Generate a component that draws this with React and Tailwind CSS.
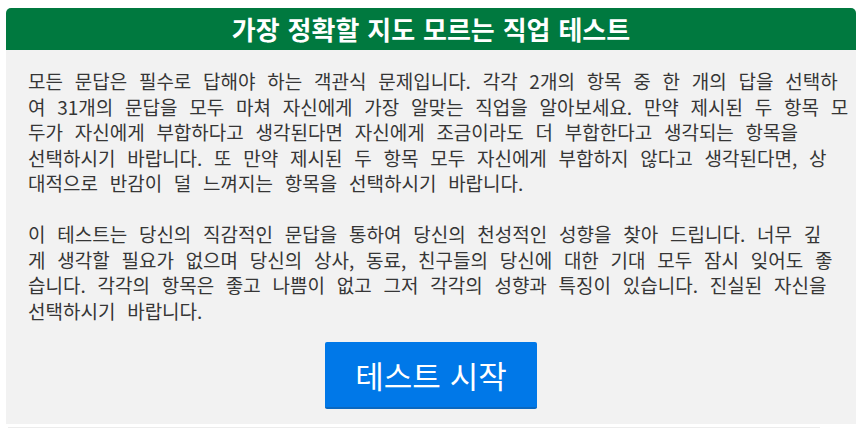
export default function App() {
  const font = { fontFamily: '"Noto Sans CJK KR", "Noto Sans", sans-serif' };
  return (
    <div className="w-[863px] h-[429px] bg-white overflow-hidden" style={font}>
      <div className="ml-[6px] mt-[8px] w-[850px]">
        <div className="h-[42px] rounded-t-[5px] bg-[#00793f] flex items-center justify-center">
          <h1 className="text-white text-[26px] font-bold leading-none [word-spacing:2px]">
            가장 정확할 지도 모르는 직업 테스트
          </h1>
        </div>
        <div className="bg-[#f2f2f2] h-[374px] px-[22px] pt-[18px]">
          <p className="text-[19px] leading-[25.5px] text-[#363636] [word-spacing:7.5px] whitespace-nowrap">
            모든 문답은 필수로 답해야 하는 객관식 문제입니다. 각각 2개의 항목 중 한 개의 답을 선택하<br />
            여 31개의 문답을 모두 마쳐 자신에게 가장 알맞는 직업을 알아보세요. 만약 제시된 두 항목 모<br />
            두가 자신에게 부합하다고 생각된다면 자신에게 조금이라도 더 부합한다고 생각되는 항목을<br />
            선택하시기 바랍니다. 또 만약 제시된 두 항목 모두 자신에게 부합하지 않다고 생각된다면, 상<br />
            대적으로 반감이 덜 느껴지는 항목을 선택하시기 바랍니다.
          </p>
          <p className="mt-[25.5px] text-[19px] leading-[25.5px] text-[#363636] [word-spacing:7.5px] whitespace-nowrap">
            이 테스트는 당신의 직감적인 문답을 통하여 당신의 천성적인 성향을 찾아 드립니다. 너무 깊<br />
            게 생각할 필요가 없으며 당신의 상사, 동료, 친구들의 당신에 대한 기대 모두 잠시 잊어도 좋<br />
            습니다. 각각의 항목은 좋고 나쁨이 없고 그저 각각의 성향과 특징이 있습니다. 진실된 자신을<br />
            선택하시기 바랍니다.
          </p>
          <div className="flex justify-center mt-[19px]">
            <button className="w-[212px] h-[67px] bg-[#0078e8] border-b-2 border-[#0a68c0] rounded-[2px] text-white text-[31px] leading-none [word-spacing:2px]">
              테스트 시작
            </button>
          </div>
        </div>
        <div className="mt-[3px] ml-[2px] w-[812px] h-[2px] border-t border-[#ececec]"></div>
      </div>
    </div>
  );
}
